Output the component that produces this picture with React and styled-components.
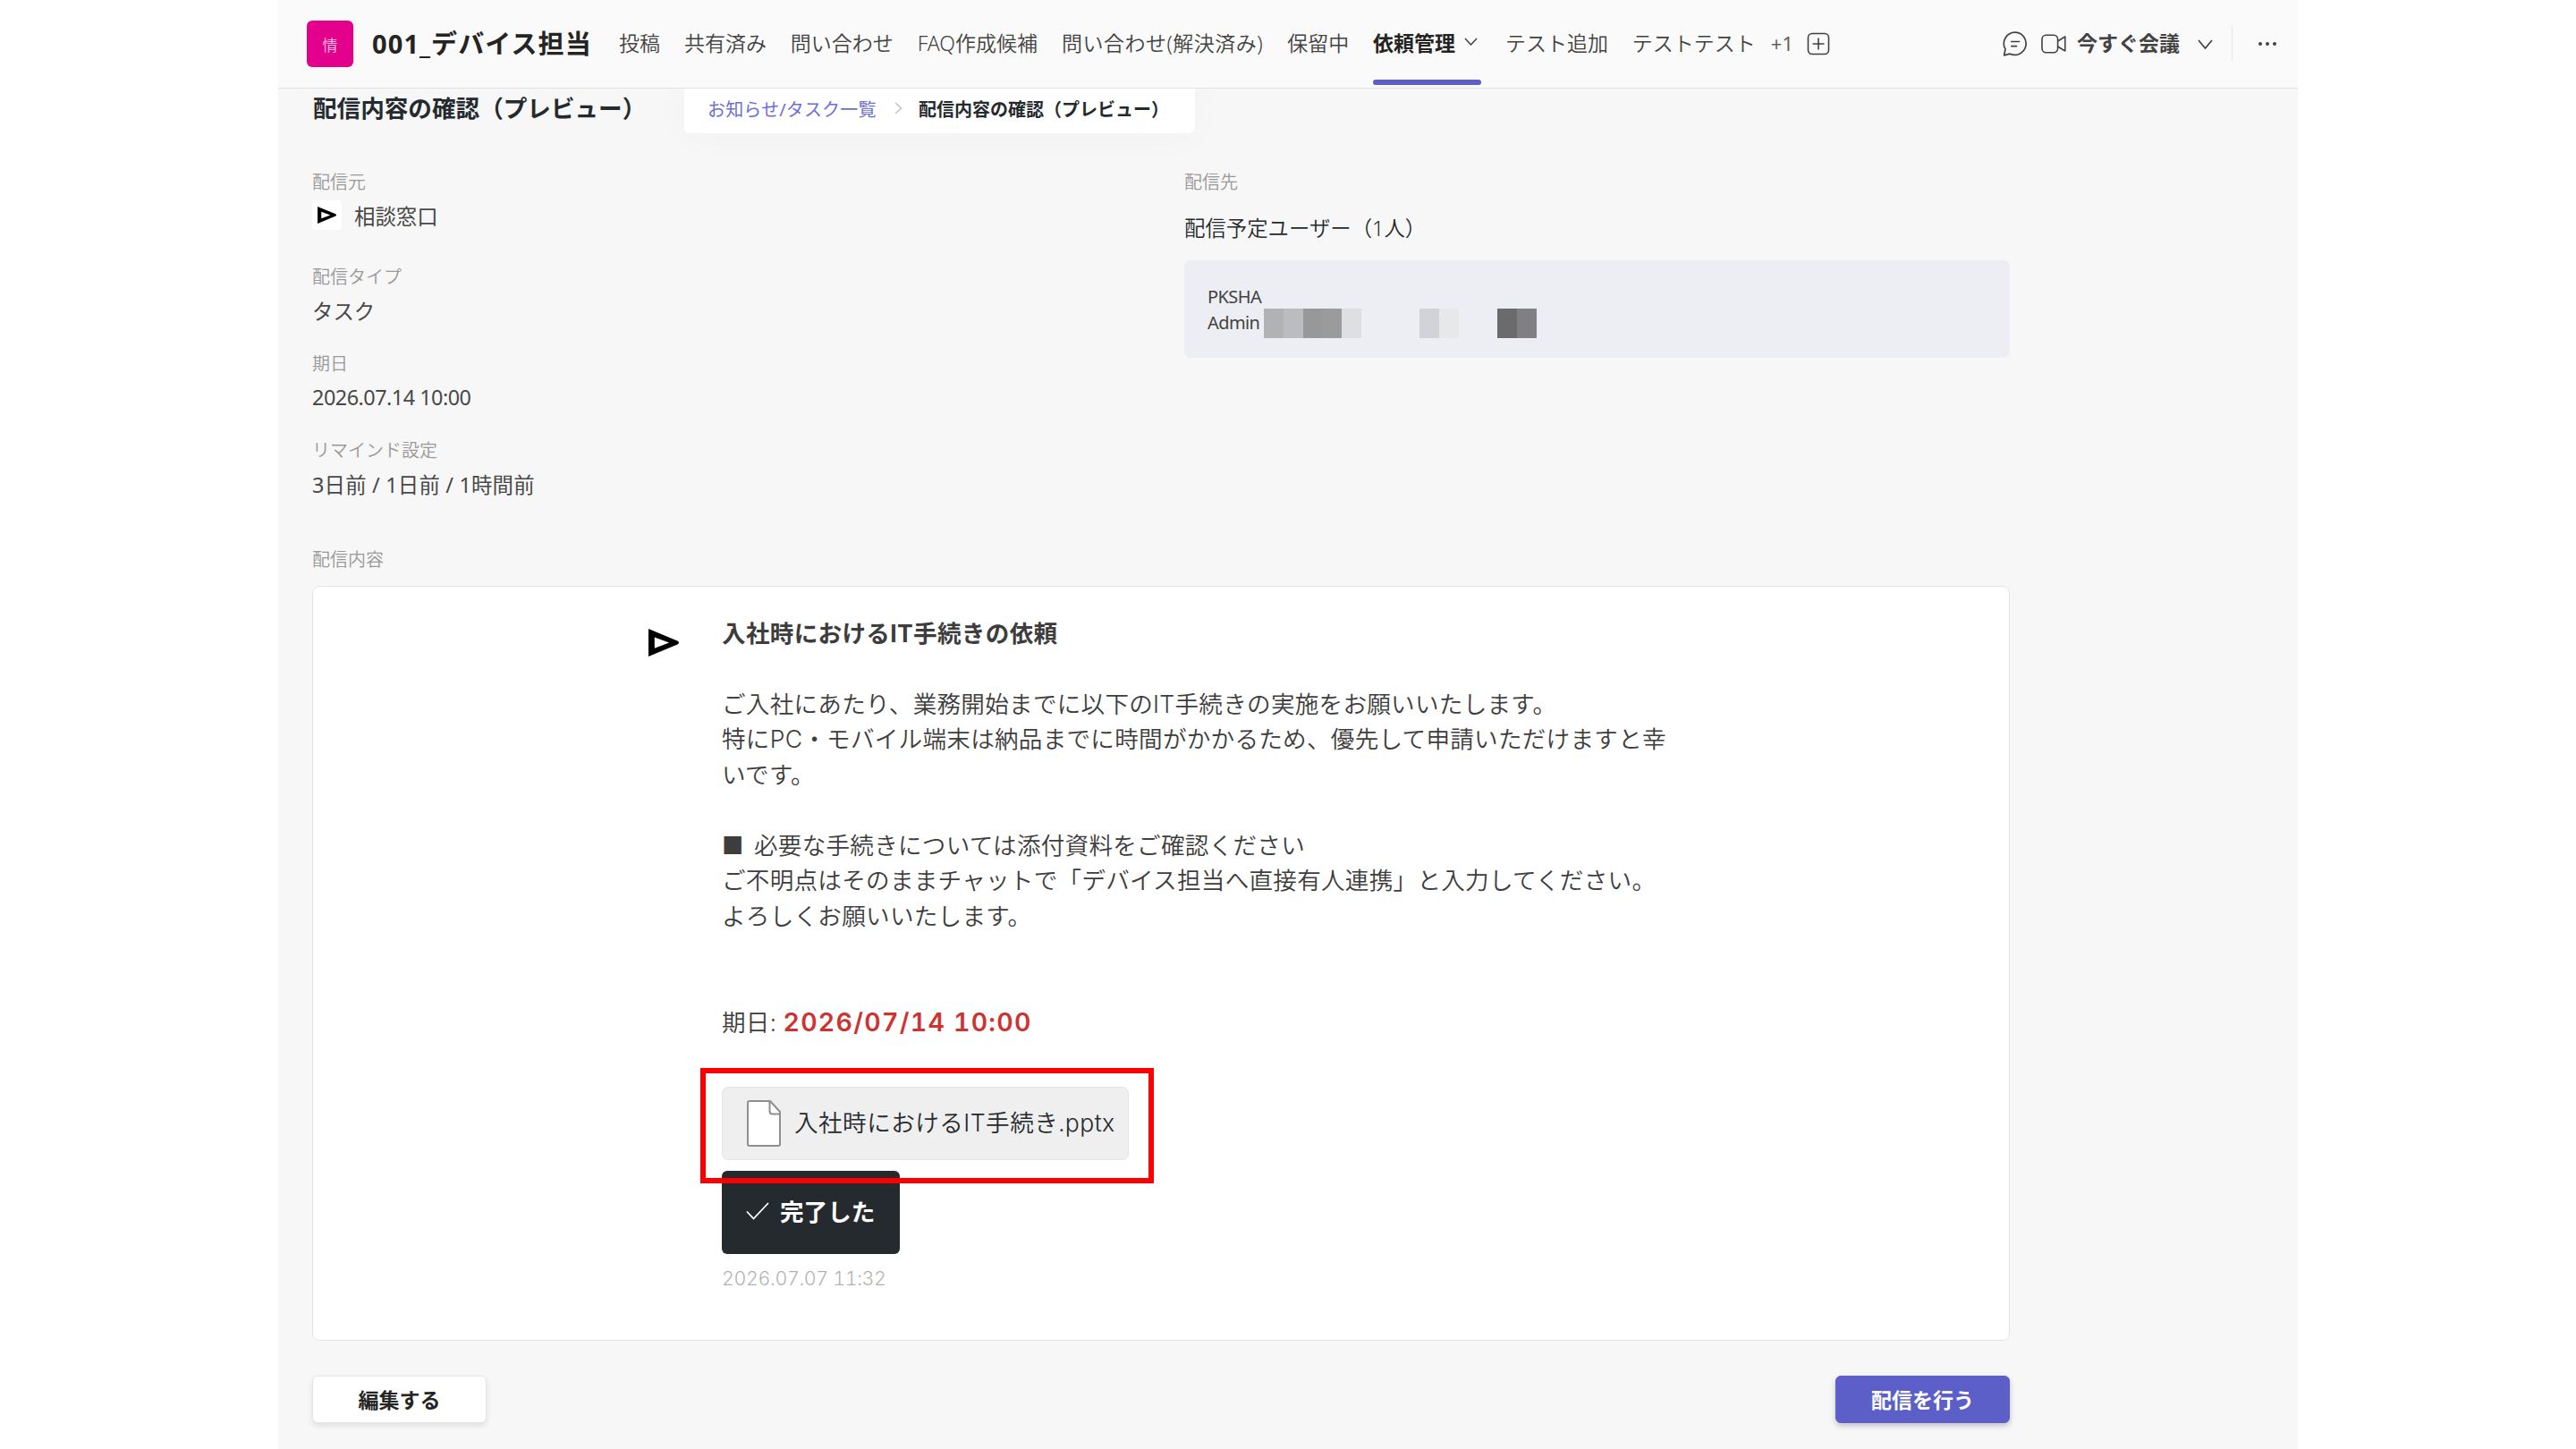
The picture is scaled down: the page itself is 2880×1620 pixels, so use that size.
import React from 'react';
import styled, { createGlobalStyle } from 'styled-components';

const NAV = ['投稿', '共有済み', '問い合わせ', 'FAQ作成候補', '問い合わせ(解決済み)', '保留中'];

const FIELDS = [
    { label: '配信元', value: '相談窓口', logo: true },
    { label: '配信タイプ', value: 'タスク' },
    { label: '期日', value: '2026.07.14 10:00', spacing: -0.5 },
    { label: 'リマインド設定', value: '3日前 / 1日前 / 1時間前', spacing: 0.2 },
];

// colours of the masked user name, null is an empty cell
const MASK = ['#b1b2b4', '#bbbcc0', '#979899', '#9b9b9c', '#dedfe3', null, null, null, '#d2d3d7', '#e7e8ea', null, null, '#6b6b6d', '#808082'];

function Arrow({ width, height }) {
    return (
        <svg width={width} height={height} viewBox="0 0 33 30">
            <path fillRule="evenodd" d="M0 0L32 13.2Q34 15 32 16.6L0 30ZM6.6 9.2V21L22.5 15Z" fill="#000" />
        </svg>
    );
}

function Chevron({ width, height, stroke = '#424242', weight = 1.5 }) {
    return (
        <svg width={width} height={height} viewBox={`0 0 ${width} ${height}`} fill="none">
            <path d={`M1 1L${width / 2} ${height - 1}L${width - 1} 1`} stroke={stroke} strokeWidth={weight} />
        </svg>
    );
}

function App() {
    return (
        <Page>
            <GlobalStyle />
            <Window>
                <Header>
                    <TeamIcon>情</TeamIcon>
                    <TeamName>001_デバイス担当</TeamName>
                    <Nav>
                        {NAV.map((item) => <NavItem key={item} $wide={item.includes('(')}>{item}</NavItem>)}
                        <NavItem $active>
                            依頼管理
                            <Chevron width={15} height={9} />
                        </NavItem>
                        <NavItem>テスト追加</NavItem>
                        <NavItem>テストテスト</NavItem>
                    </Nav>
                    <More>+1</More>
                    <svg width="26" height="26" viewBox="0 0 26 26" fill="none" stroke="#424242" strokeWidth="1.6">
                        <rect x="1.5" y="1.5" width="23" height="23" rx="4.5" />
                        <path d="M13 6.5V19.5M6.5 13H19.5" />
                    </svg>
                    <Actions>
                        <svg width="28" height="28" viewBox="0 0 28 28" fill="none" stroke="#424242" strokeWidth="1.7" strokeLinecap="round" strokeLinejoin="round">
                            <path d="M14.3 1.2A12.6 12.6 0 1 1 8.2 25.2L1.6 26.8L3 20A12.6 12.6 0 0 1 14.3 1.2Z" />
                            <path d="M9.8 11.5H18.5M9.8 16.6H15.5" />
                        </svg>
                        <svg width="28" height="22" viewBox="0 0 28 22" fill="none" stroke="#424242" strokeWidth="1.6" strokeLinejoin="round">
                            <rect x="1" y="1.2" width="17.6" height="19.6" rx="4.5" />
                            <path d="M18.6 8L26.8 3V19L18.6 14" />
                        </svg>
                        <Meet>今すぐ会議</Meet>
                        <Chevron width={17} height={11} weight={1.7} />
                        <Divider />
                        <Dots><i /><i /><i /></Dots>
                    </Actions>
                </Header>
                <Content>
                    <TitleRow>
                        <Title>配信内容の確認（プレビュー）</Title>
                        <Breadcrumb>
                            <CrumbLink>お知らせ/タスク一覧</CrumbLink>
                            <svg width="9" height="14" viewBox="0 0 9 14" fill="none">
                                <path d="M1 1L7.5 7L1 13" stroke="#c4c4c4" strokeWidth="1.6" />
                            </svg>
                            <Crumb>配信内容の確認（プレビュー）</Crumb>
                        </Breadcrumb>
                    </TitleRow>
                    <Info>
                        <div>
                            {FIELDS.map((field) => (
                                <Field key={field.label} $first={field.logo}>
                                    <Label>{field.label}</Label>
                                    <Value $spacing={field.spacing}>
                                        {field.logo && <Avatar><Arrow width={21} height={19} /></Avatar>}
                                        {field.value}
                                    </Value>
                                </Field>
                            ))}
                        </div>
                        <div>
                            <Label>配信先</Label>
                            <Recipients>配信予定ユーザー（1人）</Recipients>
                            <UserBox>
                                <UserLine>PKSHA</UserLine>
                                <UserLine>
                                    <span>Admin</span>
                                    <Mask>
                                        {MASK.map((color, i) => <MaskCell key={i} $color={color} />)}
                                    </Mask>
                                </UserLine>
                            </UserBox>
                        </div>
                    </Info>
                    <Label>配信内容</Label>
                    <Card>
                        <Sender><Arrow width={34} height={31} /></Sender>
                        <Message>
                            <Subject>入社時におけるIT手続きの依頼</Subject>
                            <Body>
                                ご入社にあたり、業務開始までに以下のIT手続きの実施をお願いいたします。<br />
                                特にPC・モバイル端末は納品までに時間がかかるため、優先して申請いただけますと幸<br />
                                いです。<br />
                                <br />
                                ■ 必要な手続きについては添付資料をご確認ください<br />
                                ご不明点はそのままチャットで「デバイス担当へ直接有人連携」と入力してください。<br />
                                よろしくお願いいたします。
                            </Body>
                            <Due>期日: <strong>2026/07/14 10:00</strong></Due>
                            <FileWrap>
                                <FileChip>
                                    <svg width="38" height="52" viewBox="0 0 38 52" fill="#fff" stroke="#8f8f8f" strokeWidth="2" strokeLinejoin="round">
                                        <path d="M3 1H26L37 13V49Q37 51 35 51H3Q1 51 1 49V3Q1 1 3 1Z" />
                                        <path d="M25.5 1V12Q25.5 15.5 28.5 15.5H37" fill="none" />
                                    </svg>
                                    <span>入社時におけるIT手続き.pptx</span>
                                </FileChip>
                                <Marker />
                            </FileWrap>
                            <DoneButton>
                                <svg width="26" height="20" viewBox="0 0 26 20" fill="none">
                                    <path d="M1 10.5L8.5 18.5L25 1" stroke="#fff" strokeWidth="1.8" />
                                </svg>
                                完了した
                            </DoneButton>
                            <Time>2026.07.07 11:32</Time>
                        </Message>
                    </Card>
                    <Footer>
                        <Button>編集する</Button>
                        <Button $primary>配信を行う</Button>
                    </Footer>
                </Content>
            </Window>
        </Page>
    );
}

const GlobalStyle = createGlobalStyle`
    * {
        box-sizing: border-box;
    }
    body {
        margin: 0;
        background: #fff;
        font-family: "Noto Sans", "Noto Sans CJK JP", sans-serif;
    }
    svg {
        display: block;
        flex-shrink: 0;
    }
`;

const Page = styled.div`
    width: 2880px;
    height: 1620px;
    overflow: hidden;
    padding-left: 311px;
`;

const Window = styled.div`
    width: 2258px;
    height: 1620px;
    overflow: hidden;
    background: #f7f7f7;
    display: flex;
    flex-direction: column;
`;

const Header = styled.header`
    height: 99px;
    flex-shrink: 0;
    padding-left: 32px;
    display: flex;
    align-items: center;
    background: #fafafa;
    border-bottom: 1px solid #e0e0e0;
    position: relative;
    z-index: 1;
    white-space: nowrap;
`;

const TeamIcon = styled.div`
    width: 52px;
    height: 52px;
    border-radius: 6px;
    background: #e3008c;
    color: #f7b5de;
    font-size: 17px;
    display: flex;
    align-items: center;
    justify-content: center;
`;

const TeamName = styled.h1`
    margin: 0 0 0 21px;
    padding-bottom: 5px;
    width: 276px;
    font-size: 29px;
    font-weight: 700;
    letter-spacing: 1.1px;
    color: #242424;
`;

const Nav = styled.nav`
    display: flex;
    align-self: stretch;
    gap: 26.9px;
`;

const NavItem = styled.div`
    display: flex;
    align-items: center;
    gap: 10px;
    padding-bottom: 5px;
    font-size: 23px;
    position: relative;
    letter-spacing: ${(p) => (p.$wide ? 0.5 : 0)}px;
    color: ${(p) => (p.$active ? '#242424' : '#424242')};
    font-weight: ${(p) => (p.$active ? 700 : 350)};
    ${(p) => p.$active && `
        padding-right: 4px;
        &::after {
            content: '';
            position: absolute;
            left: 0;
            right: 0;
            bottom: 3px;
            height: 6px;
            border-radius: 3px;
            background: #5b5fc7;
        }
    `}
`;

const More = styled.span`
    margin: 0 15px 0 17px;
    padding-bottom: 3px;
    font-size: 22px;
    color: #616161;
`;

const Actions = styled.div`
    display: flex;
    align-items: center;
    margin-left: auto;
    padding-right: 24px;
    svg + svg {
        margin-left: 15px;
    }
`;

const Meet = styled.span`
    margin: 0 20px 0 12px;
    padding-bottom: 5px;
    font-size: 23px;
    font-weight: 700;
    color: #424242;
`;

const Divider = styled.div`
    width: 1px;
    height: 40px;
    margin: 0 29px 0 21px;
    background: #e6e6e6;
`;

const Dots = styled.div`
    display: flex;
    gap: 4px;
    i {
        width: 4px;
        height: 4px;
        border-radius: 50%;
        background: #424242;
    }
`;

const Content = styled.main`
    flex: 1;
    padding: 0 322px 0 38px;
`;

const TitleRow = styled.div`
    display: flex;
    height: 90px;
    align-items: flex-start;
    white-space: nowrap;
`;

const Title = styled.h2`
    margin: 0;
    width: 416px;
    padding-left: 1px;
    font-size: 26.6px;
    font-weight: 700;
    line-height: 44px;
    color: #252a2e;
`;

const Breadcrumb = styled.div`
    display: flex;
    align-items: center;
    width: 571px;
    height: 50px;
    padding: 0 0 6px 26px;
    border-radius: 0 0 6px 6px;
    background: #fff;
    box-shadow: 0 0 50px rgba(0, 0, 0, 0.03);
    font-size: 20px;
`;

const CrumbLink = styled.span`
    width: 209px;
    letter-spacing: 0.15px;
    color: #6b6fd6;
`;

const Crumb = styled.span`
    margin-left: 18px;
    font-weight: 700;
    color: #252a2e;
`;

const Info = styled.section`
    display: grid;
    grid-template-columns: 975px 923px;
    height: 422px;
`;

const Field = styled.div`
    margin-bottom: ${(p) => (p.$first ? 38 : 29)}px;
`;

const Label = styled.div`
    height: 30px;
    line-height: 30px;
    font-size: 20px;
    font-weight: 350;
    color: #999;
`;

const Value = styled.div`
    display: flex;
    align-items: center;
    height: 34px;
    margin-top: 4px;
    padding-top: 1px;
    font-size: 23.4px;
    letter-spacing: ${(p) => p.$spacing || 0}px;
    color: #484848;
`;

const Avatar = styled.div`
    width: 33px;
    height: 33px;
    margin: 0 14px 0 0;
    border-radius: 4px;
    background: #fff;
    display: flex;
    align-items: center;
    justify-content: center;
`;

const Recipients = styled.div`
    margin: 19px 0 19px;
    line-height: 34px;
    font-size: 23.4px;
    font-weight: 350;
    color: #252a2e;
`;

const UserBox = styled.div`
    height: 109px;
    padding: 26px;
    border-radius: 7px;
    background: #edeef3;
`;

const UserLine = styled.div`
    display: flex;
    align-items: center;
    height: 29px;
    font-size: 20px;
    letter-spacing: -0.6px;
    color: #424242;
    span {
        width: 63px;
    }
`;

const Mask = styled.div`
    display: flex;
    height: 33px;
    margin-top: 2px;
`;

const MaskCell = styled.div`
    width: 21.75px;
    background: ${(p) => p.$color || 'transparent'};
`;

const Card = styled.section`
    display: flex;
    width: 1898px;
    height: 844px;
    margin-top: 14px;
    border: 1px solid #e4e4e4;
    border-radius: 8px;
    background: #fff;
`;

const Sender = styled.div`
    width: 457px;
    padding: 47px 0 0 375px;
`;

const Message = styled.div`
    color: #3d3d3d;
    font-family: "Inter", "Noto Sans CJK JP", sans-serif;
    font-size: 26.6px;
    font-weight: 350;
    line-height: 39.5px;
    letter-spacing: 0.25px;
    font-variant-numeric: tabular-nums;
    white-space: nowrap;
`;

const Subject = styled.div`
    margin-top: 33px;
    font-weight: 700;
    letter-spacing: 0.3px;
`;

const Body = styled.div`
    margin-top: 39px;
    word-spacing: 4px;
`;

const Due = styled.div`
    margin-top: 79px;
    strong {
        font-size: 28.5px;
        font-weight: 600;
        letter-spacing: 1.25px;
        color: #cc3333;
    }
`;

const FileWrap = styled.div`
    position: relative;
    width: 455px;
    margin-top: 51px;
`;

const FileChip = styled.div`
    display: flex;
    align-items: center;
    gap: 15px;
    height: 82px;
    padding-left: 27px;
    border: 1px solid #e4e4e4;
    border-radius: 7px;
    background: #efefef;
    color: #252a2e;
    letter-spacing: 0.45px;
    span {
        padding-top: 1px;
    }
`;

// red frame drawn over the attachment and the top of the button
const Marker = styled.div`
    position: absolute;
    left: -24px;
    top: -21px;
    width: 507px;
    height: 129px;
    border: 6px solid #ff0000;
`;

const DoneButton = styled.button`
    display: flex;
    align-items: center;
    gap: 12px;
    width: 199px;
    height: 93px;
    margin-top: 12px;
    padding: 0 0 3px 27px;
    border: none;
    border-radius: 6px;
    background: #252a2e;
    color: #fff;
    font-family: inherit;
    font-size: 26.6px;
    font-weight: 600;
`;

const Time = styled.div`
    margin-top: 8px;
    font-size: 21.5px;
    letter-spacing: -0.4px;
    color: #b3b3b3;
`;

const Footer = styled.div`
    display: flex;
    justify-content: space-between;
    margin-top: 39px;
`;

const Button = styled.button`
    width: 195px;
    height: 53px;
    padding: 0 0 2px;
    border: 1px solid ${(p) => (p.$primary ? '#5b5fc7' : '#e6e6e6')};
    border-radius: 6px;
    background: ${(p) => (p.$primary ? '#5b5fc7' : '#fff')};
    color: ${(p) => (p.$primary ? '#fff' : '#252525')};
    box-shadow: 0 3px 6px rgba(0, 0, 0, ${(p) => (p.$primary ? 0.22 : 0.1)});
    font-family: inherit;
    font-size: 23px;
    font-weight: 600;
`;

export default App;
